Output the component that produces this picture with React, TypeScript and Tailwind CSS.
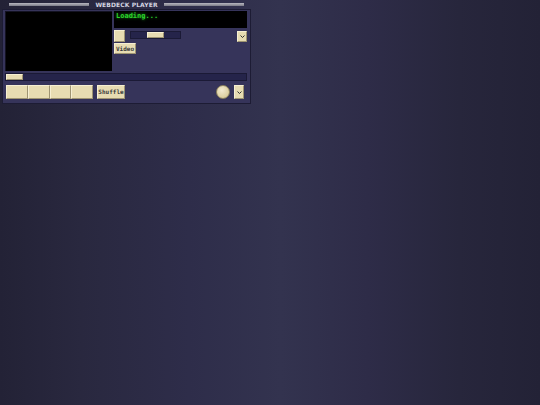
const beige =
  "bg-[#e7dcb2] border border-t-[#f6efd2] border-l-[#f6efd2] border-b-[#9e9472] border-r-[#9e9472]";

function Btn({ className = "", children }: { className?: string; children?: React.ReactNode }) {
  return (
    <div
      className={`${beige} flex items-center justify-center text-[6px] leading-none font-bold text-[#3a3a3a] ${className}`}
      style={{ fontFamily: '"DejaVu Sans Mono", monospace' }}
    >
      {children}
    </div>
  );
}

function Caret() {
  return (
    <svg width="5" height="3" viewBox="0 0 5 3">
      <path d="M0.5 0.5 L2.5 2.5 L4.5 0.5" stroke="#333" strokeWidth="1" fill="none" />
    </svg>
  );
}

export default function App() {
  return (
    <div className="w-[540px] h-[405px] bg-[linear-gradient(to_right,#232236_0%,#29283f_15%,#2e2d4a_35%,#33334f_52%,#2e2c48_68%,#27263c_85%,#232236_100%)]">
      <div className="ml-[2px] w-[249px]">
        <div className="h-[9px] flex items-center gap-[6px] px-[7px]">
          <div className="flex-1 h-[3px] bg-[linear-gradient(to_bottom,#b8b8c0,#7c7c88)]" />
          <span
            className="text-[6px] leading-none font-bold text-[#d4d4e0] tracking-[0.1px]"
            style={{ fontFamily: '"DejaVu Sans", sans-serif' }}
          >
            WEBDECK PLAYER
          </span>
          <div className="flex-1 h-[3px] bg-[linear-gradient(to_bottom,#b8b8c0,#7c7c88)]" />
        </div>

        <div className="h-[95px] border border-[#1d1c34] bg-[#36345a] px-[2px] pt-[1px]">
          <div className="flex gap-[2px]">
            <div className="w-[107px] h-[60px] bg-black border-l border-t border-[#141322]" />
            <div className="flex-1 flex flex-col mr-[1px]">
              <div
                className="h-[17px] bg-black px-[2px] pt-[2px] text-[7px] leading-none font-bold text-[#2bd42b] [text-shadow:0_0_3px_#1f9a1f]"
                style={{ fontFamily: '"DejaVu Sans Mono", monospace' }}
              >
                Loading...
              </div>
              <div className="mt-[2px] flex items-start">
                <Btn className="w-[11px] h-[12px]" />
                <div className="ml-[5px] mt-[1px] w-[51px] h-[8px] bg-[#25244a] border border-[#1b1a36] flex items-center">
                  <div className={`${beige} ml-[16px] w-[17px] h-[6px]`} />
                </div>
                <div className="flex-1" />
                <Btn className="w-[10px] h-[11px] mt-[1px]">
                  <Caret />
                </Btn>
              </div>
              <div className="mt-[1px] flex">
                <Btn className="w-[22px] h-[11px]">Video</Btn>
              </div>
            </div>
          </div>

          <div className="mt-[2px] mr-[1px] h-[8px] bg-[#25244a] border border-[#1b1a36] flex items-center">
            <div className={`${beige} w-[17px] h-[6px]`} />
          </div>

          <div className="mt-[4px] flex items-center pl-[1px] pr-[4px]">
            <div className="flex">
              <Btn className="w-[22px] h-[14px]" />
              <Btn className="w-[22px] h-[14px]" />
              <Btn className="w-[21px] h-[14px]" />
              <Btn className="w-[22px] h-[14px]" />
            </div>
            <Btn className="ml-[4px] w-[28px] h-[14px]">Shuffle</Btn>
            <div className="flex-1" />
            <div className="w-[14px] h-[14px] rounded-full bg-[radial-gradient(circle_at_40%_35%,#f3ead0,#dccf9f_70%,#b3a67c)] border border-[#8e845f]" />
            <Btn className="ml-[4px] w-[10px] h-[14px]">
              <Caret />
            </Btn>
          </div>
        </div>
      </div>
    </div>
  );
}
